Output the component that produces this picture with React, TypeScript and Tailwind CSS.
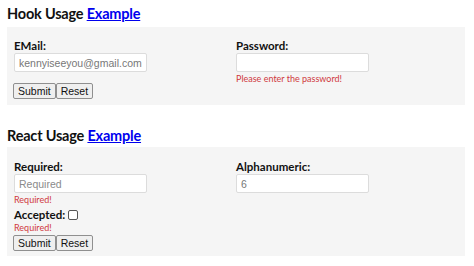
import React from 'react';

const ui = { fontFamily: 'Lato, "Noto Sans", sans-serif' };
const arial = { fontFamily: '"Liberation Sans", Arial, sans-serif' };

function Label({ children }: { children: React.ReactNode }) {
  return (
    <div className="text-[11.5px] font-bold leading-[13px] text-[#111]" style={ui}>
      {children}
    </div>
  );
}

function Field({ value, placeholder }: { value?: string; placeholder?: string }) {
  return (
    <input
      readOnly
      value={value ?? ''}
      placeholder={placeholder}
      className="mt-[1px] block h-[19px] w-[133px] rounded-[2px] border border-[#dcdcdc] bg-white pl-[4px] pr-[1px] text-[10.5px] text-[#777] placeholder:text-[#8a8a8a] outline-none"
      style={arial}
    />
  );
}

function ErrorText({ children }: { children: React.ReactNode }) {
  return (
    <div className="mt-[1px] h-[11px] text-[9px] leading-[11px] text-[#d0393e]" style={ui}>
      {children}
    </div>
  );
}

function Buttons() {
  return (
    <div className="flex">
      <button
        className="h-[16px] rounded-[2px] border border-[#8f8f8f] bg-[#efefef] px-[4px] text-[10.5px] leading-[14px] text-[#111]"
        style={arial}
      >
        Submit
      </button>
      <button
        className="h-[16px] rounded-[2px] border border-[#8f8f8f] bg-[#efefef] px-[4px] text-[10.5px] leading-[14px] text-[#111]"
        style={arial}
      >
        Reset
      </button>
    </div>
  );
}

function Heading({ title }: { title: string }) {
  return (
    <h2
      className="px-[7px] text-[14.5px] font-bold leading-[20px] tracking-[-0.2px] text-[#111]"
      style={ui}
    >
      {title}{' '}
      <a href="#" className="text-[#0000ee] underline">
        Example
      </a>
    </h2>
  );
}

export default function App() {
  return (
    <div className="h-[266px] w-[474px] overflow-hidden bg-white">
      <div className="pt-[4px]">
        <Heading title="Hook Usage" />
        <div className="mx-[7px] mt-[3px] w-[458px] bg-[#f5f5f5] px-[7px] pb-[6px] pt-[12px]">
          <div className="grid grid-cols-2">
            <div>
              <Label>EMail:</Label>
              <Field value="kennyiseeyou@gmail.com" />
            </div>
            <div>
              <Label>Password:</Label>
              <Field />
              <ErrorText>Please enter the password!</ErrorText>
            </div>
          </div>
          <div className="-ml-[1px] -mt-[1px]">
            <Buttons />
          </div>
        </div>
      </div>

      <div className="mt-[21px]">
        <Heading title="React Usage" />
        <div className="mx-[7px] mt-[1px] w-[458px] bg-[#f5f5f5] px-[7px] pb-[5px] pt-[13px]">
          <div className="grid grid-cols-2">
            <div>
              <Label>Required:</Label>
              <Field placeholder="Required" />
              <ErrorText>Required!</ErrorText>
            </div>
            <div>
              <Label>Alphanumeric:</Label>
              <Field value="6" />
            </div>
          </div>
          <div className="mt-[3px] flex items-center">
            <Label>Accepted:</Label>
            <input
              type="checkbox"
              readOnly
              className="ml-[3px] h-[10px] w-[10px] appearance-none rounded-[2px] border border-[#555] bg-white"
            />
          </div>
          <ErrorText>Required!</ErrorText>
          <div className="-ml-[1px] mt-[2px]">
            <Buttons />
          </div>
        </div>
      </div>
    </div>
  );
}
